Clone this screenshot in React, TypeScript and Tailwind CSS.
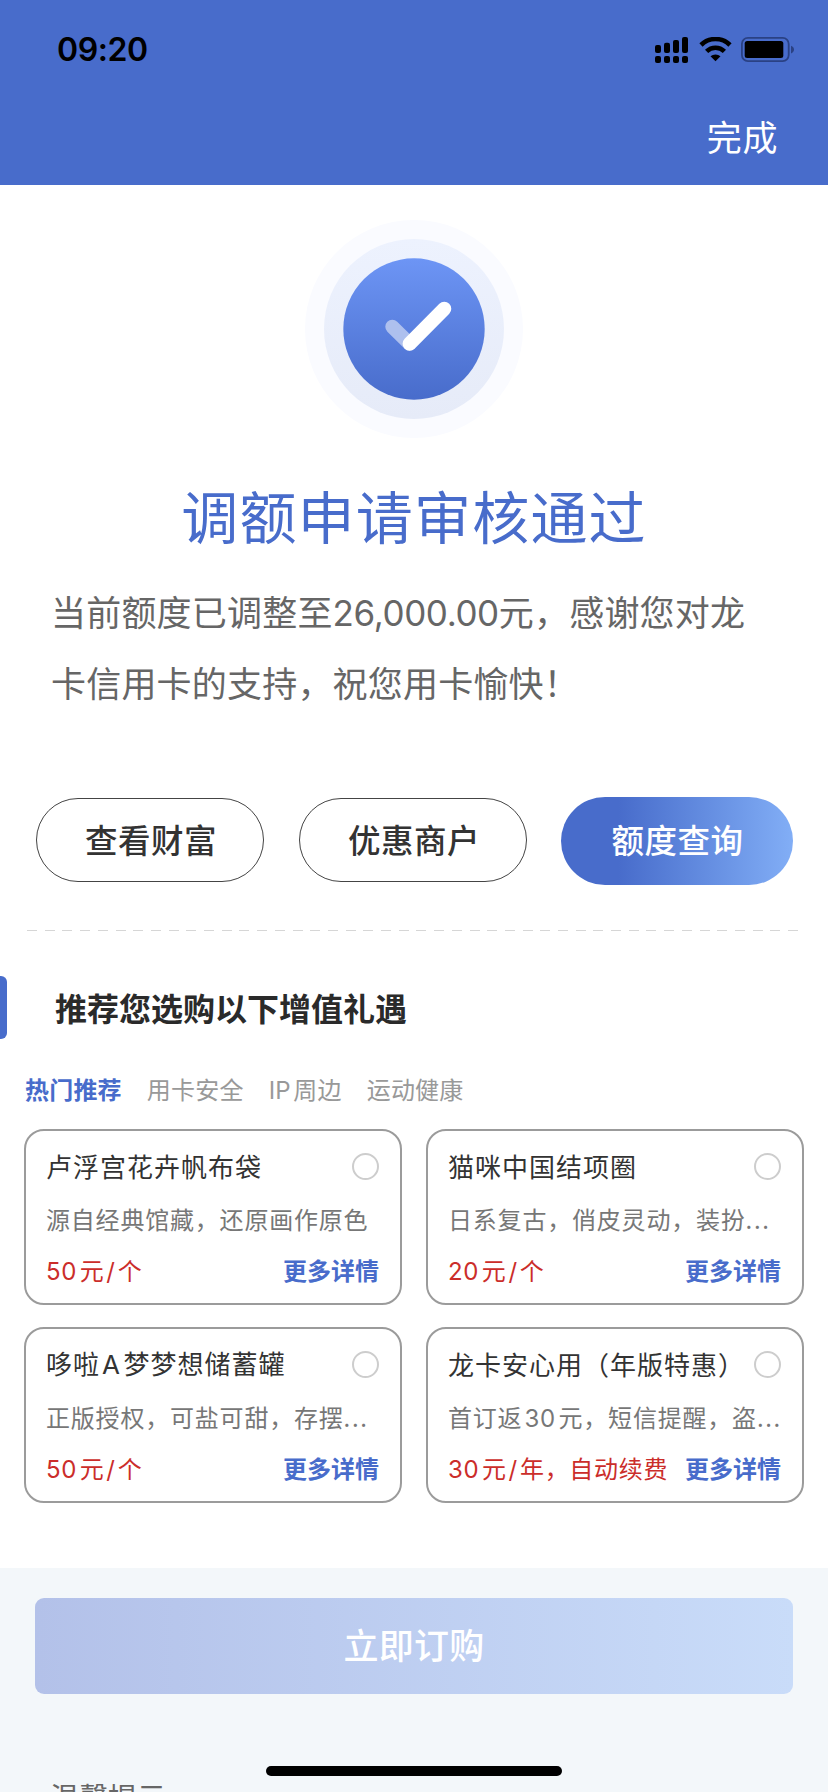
import React, { useState } from 'react';

interface Gift {
  name: string;
  desc: string;
  price: string;
}

const TABS = ['热门推荐', '用卡安全', 'IP周边', '运动健康'];

const GIFTS: Gift[] = [
  { name: '卢浮宫花卉帆布袋', desc: '源自经典馆藏，还原画作原色', price: '50元/个' },
  { name: '猫咪中国结项圈', desc: '日系复古，俏皮灵动，装扮…', price: '20元/个' },
  { name: '哆啦A梦梦想储蓄罐', desc: '正版授权，可盐可甜，存摆…', price: '50元/个' },
  { name: '龙卡安心用（年版特惠）', desc: '首订返30元，短信提醒，盗…', price: '30元/年，自动续费' },
];

// Latin letters and digits use Inter with a thin gap next to Chinese characters
const Mixed: React.FC<{ text: string }> = ({ text }) => (
  <>
    {text.split(/([A-Za-z0-9]+|\/|…)/).map((part, index, parts) => {
      if (!part) return null;
      if (part === '…') {
        return (
          <span key={index} className="tracking-[1.6px]">
            ...
          </span>
        );
      }
      if (part === '/') {
        return (
          <span key={index} className="mx-[2px] font-['Inter']">
            /
          </span>
        );
      }
      if (/^[A-Za-z0-9]+$/.test(part)) {
        return (
          <span
            key={index}
            className={`font-['Inter'] mr-[2.5px] ${parts[index - 1] ? 'ml-[2px]' : ''}`}
          >
            {part}
          </span>
        );
      }
      return <span key={index}>{part}</span>;
    })}
  </>
);

const StatusIcons: React.FC = () => (
  <svg className="w-[140px] h-[27px]" viewBox="655 37 140 27">
    {/* Dual SIM signal */}
    <g fill="#000">
      <rect x="655" y="45" width="6" height="8" rx="2" />
      <rect x="664" y="42.8" width="6" height="10.2" rx="2" />
      <rect x="673" y="40" width="6" height="13" rx="2" />
      <rect x="682" y="37" width="6" height="16" rx="2" />
      <rect x="655" y="56" width="6" height="7" rx="2" />
      <rect x="664" y="56" width="6" height="7" rx="2" />
      <rect x="673" y="56" width="6" height="7" rx="2" />
      <rect x="682" y="56" width="6" height="7" rx="2" />
    </g>
    {/* Wifi */}
    <g fill="none" stroke="#000" strokeWidth="4.6">
      <path d="M701 45 A20.6 20.6 0 0 1 730 45" />
      <path d="M706.6 51.4 A12.8 12.8 0 0 1 724.4 51.4" />
    </g>
    <path d="M710.5 56.3 A7.6 7.6 0 0 1 720.5 56.3 L715.5 61.2 Z" fill="#000" />
    {/* Battery */}
    <rect x="741.9" y="37.9" width="46.8" height="23.2" rx="6" fill="none" stroke="#2a4184" strokeWidth="1.8" />
    <rect x="744.7" y="41" width="38.6" height="17" rx="2.5" fill="#000" />
    <path d="M791 45.8 C795 47.2 795 52 791 53.4 Z" fill="#2a4184" />
  </svg>
);

const SuccessBadge: React.FC = () => (
  <svg className="w-[220px] h-[220px]" viewBox="303.7 219 220 220">
    <defs>
      <linearGradient id="disc" x1="0" y1="0" x2="0" y2="1">
        <stop offset="0" stopColor="#6d95f5" />
        <stop offset="1" stopColor="#486ccb" />
      </linearGradient>
      <linearGradient id="ring" x1="0" y1="0" x2="0" y2="1">
        <stop offset="0" stopColor="#edf2fe" />
        <stop offset="1" stopColor="#e6ebf8" />
      </linearGradient>
    </defs>
    <circle cx="413.7" cy="329" r="109" fill="#fafbff" />
    <circle cx="413.7" cy="329" r="90" fill="url(#ring)" />
    <circle cx="413.7" cy="329" r="70.7" fill="url(#disc)" />
    <path d="M392 326.7 L409.3 343.7" stroke="#aec0ee" strokeWidth="14" strokeLinecap="round" />
    <path d="M409.3 343.7 L444 308.7" stroke="#fff" strokeWidth="14" strokeLinecap="round" />
  </svg>
);

const GiftCard: React.FC<{ gift: Gift; checked: boolean; onToggle: () => void }> = ({
  gift,
  checked,
  onToggle,
}) => (
  <div className="h-[176px] rounded-[20px] border-2 border-[#9b9b9b] pl-5 pr-[21px] pt-[15px]">
    <div className="flex items-center justify-between h-10">
      <span className="text-[26px] leading-10 tracking-[1px] text-[#333] whitespace-nowrap">
        <Mixed text={gift.name} />
      </span>
      <button
        onClick={onToggle}
        aria-label="选择"
        className={`size-[27px] shrink-0 rounded-full border-2 border-[#cdcdcd] ${
          checked ? 'bg-[#486ccb]' : 'bg-white'
        }`}
      />
    </div>
    <div className="mt-[13px] h-10 text-[24px] leading-10 tracking-[0.8px] text-[#777] whitespace-nowrap">
      <Mixed text={gift.desc} />
    </div>
    <div className="mt-[11px] flex justify-between h-10 leading-10 text-[24px] whitespace-nowrap">
      <span className="tracking-[0.7px] text-[#cb2d2a]">
        <Mixed text={gift.price} />
      </span>
      <span className="font-bold text-[#486ccb]">更多详情</span>
    </div>
  </div>
);

export default function App() {
  const [activeTab, setActiveTab] = useState(TABS[0]);
  const [selected, setSelected] = useState<string[]>([]);

  const handleToggle = (name: string) => {
    setSelected(
      selected.includes(name) ? selected.filter((n) => n !== name) : [...selected, name]
    );
  };

  return (
    <div
      lang="zh-CN"
      className="relative w-[828px] h-[1792px] overflow-hidden bg-white font-['Noto_Sans_CJK_SC',sans-serif]"
    >
      {/* Header */}
      <header className="h-[185px] bg-[#486ccb]">
        <div className="flex items-start justify-between pt-[30px] pl-[57px] pr-[33px] h-[100px]">
          <span className="font-['Inter'] text-[32px] leading-10 font-semibold tracking-[-0.4px] text-black">
            09:20
          </span>
          <div className="pt-[7px]">
            <StatusIcons />
          </div>
        </div>
        <div className="flex justify-end pr-[50px] pt-[11px]">
          <button className="text-[35px] leading-[50px] tracking-[0.6px] text-white">完成</button>
        </div>
      </header>

      {/* Result */}
      <section className="flex flex-col items-center pt-[34px]">
        <SuccessBadge />
        <h1 className="mt-[35px] text-[57px] leading-[80px] tracking-[1.2px] text-[#486ccb]">
          调额申请审核通过
        </h1>
        <p className="mt-[21px] w-full pl-[51px] text-[35px] leading-[71px] tracking-[0.2px] text-[#666]">
          当前额度已调整至
          <span className="font-['Inter'] leading-none tracking-[-0.4px]">26,000.00</span>
          元，感谢您对龙
          <br />
          卡信用卡的支持，祝您用卡愉快！
        </p>
      </section>

      {/* Actions */}
      <section className="mt-[80px] flex h-[88px] items-start pl-[36px]">
        <button className="mt-px h-[84px] w-[228px] rounded-full border border-[#444] pb-px pl-[2px] text-[32.5px] tracking-[0.5px] font-medium text-[#333]">
          查看财富
        </button>
        <button className="mt-px ml-[35px] h-[84px] w-[228px] rounded-full border border-[#444] pb-px pl-[2px] text-[32.5px] tracking-[0.5px] font-medium text-[#333]">
          优惠商户
        </button>
        <button className="ml-[34px] h-[88px] w-[232px] rounded-full bg-linear-to-r from-[#486ccb] from-25% to-[#82aef6] pb-[3px] pl-px text-[32.5px] tracking-[0.5px] font-medium text-white">
          额度查询
        </button>
      </section>

      <div className="mt-[45px] ml-[27px] w-[772px] h-px bg-[repeating-linear-gradient(90deg,#d6d6d6_0_10px,transparent_10px_17.7px)]" />

      {/* Gifts */}
      <section>
        <div className="mt-[45px] flex h-[63px] items-center">
          <div className="h-full w-[7px] rounded-r-[6px] bg-[#486ccb]" />
          <h2 className="ml-[48px] pb-[2px] text-[32px] font-bold text-[#2a2a2a]">
            推荐您选购以下增值礼遇
          </h2>
        </div>

        <nav className="mt-[30px] ml-[25px] flex h-10 gap-[25px]">
          {TABS.map((tab) => (
            <button
              key={tab}
              onClick={() => setActiveTab(tab)}
              className={`text-[24px] leading-10 tracking-[0.2px] ${
                tab === activeTab ? 'font-bold text-[#486ccb]' : 'text-[#999]'
              }`}
            >
              <Mixed text={tab} />
            </button>
          ))}
        </nav>

        <div className="mt-[20px] mx-6 grid grid-cols-2 gap-x-6 gap-y-[22px]">
          {GIFTS.map((gift) => (
            <GiftCard
              key={gift.name}
              gift={gift}
              checked={selected.includes(gift.name)}
              onToggle={() => handleToggle(gift.name)}
            />
          ))}
        </div>
      </section>

      {/* Order */}
      <footer className="mt-[65px] h-[224px] bg-[#f3f7fa] pt-[30px]">
        <button className="mx-[35px] h-[96px] w-[758px] rounded-[9px] bg-linear-to-r from-[#b3c1e9] to-[#c9dcf9] pb-[3px] text-[35px] tracking-[0.2px] font-medium text-white">
          立即订购
        </button>
        <p className="mt-[80px] ml-[50px] text-[29px] leading-[44px] text-[#666]">温馨提示</p>
      </footer>

      {/* Home indicator */}
      <div className="absolute bottom-4 left-[266px] h-[10px] w-[296px] rounded-full bg-black" />
    </div>
  );
}
